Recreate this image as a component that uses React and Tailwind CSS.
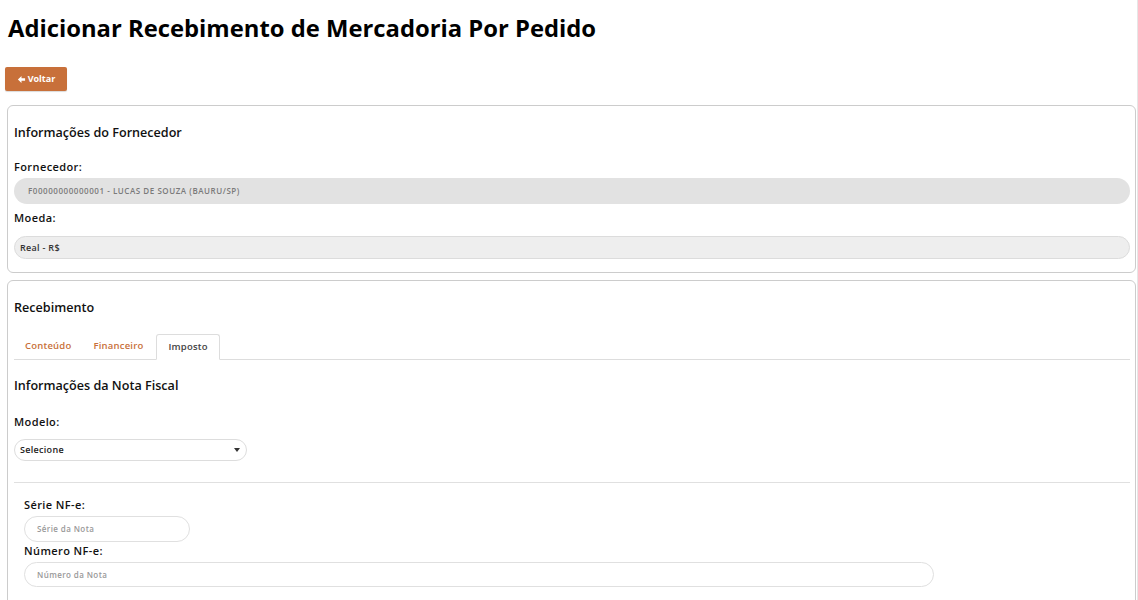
import React from "react";

export default function App() {
  const f = { fontFamily: '"Open Sans", "Noto Sans", sans-serif' };
  return (
    <div className="w-[1138px] h-[600px] bg-white overflow-hidden border-r border-[#e6e6e6] text-[#111]" style={f}>
      <div className="pl-[8px] pt-[12px]">
        <h1 className="text-[23.8px] leading-[32px] font-bold text-black">Adicionar Recebimento de Mercadoria Por Pedido</h1>
      </div>
      <div className="pl-[5px] mt-[23px]">
        <button className="w-[62px] h-[24px] bg-[#c8703a] rounded-[2px] text-white text-[9px] font-bold flex items-center justify-center gap-[2px] shadow-[0_1px_1px_rgba(0,0,0,0.15)]">
          <svg width="9" height="9" viewBox="0 0 10 10"><path d="M1 5 L5 1 L5 3.5 L9 3.5 L9 6.5 L5 6.5 L5 9 Z" fill="white" /></svg>
          Voltar
        </button>
      </div>

      <div className="mx-[7px] mt-[14px] w-[1129px] h-[168px] border border-[#cccccc] rounded-[6px] px-[6px] pt-[18px]">
        <h2 className="text-[12.6px] leading-[18px] font-semibold">Informações do Fornecedor</h2>
        <div className="mt-[18px] text-[11px] leading-[14px] font-semibold tracking-[0.4px]">Fornecedor:</div>
        <div className="mt-[4px] h-[26px] w-[1116px] rounded-full bg-[#e2e2e2] flex items-center pl-[14px] text-[8px] font-semibold text-[#7a7a7a] tracking-[0.55px]">F00000000000001 - LUCAS DE SOUZA (BAURU/SP)</div>
        <div className="mt-[7px] text-[11px] leading-[14px] font-semibold tracking-[0.4px]">Moeda:</div>
        <div className="mt-[11px] h-[23px] w-[1116px] rounded-full bg-[#eeeeee] border border-[#dcdcdc] flex items-center pl-[5px] text-[9px] font-semibold text-[#333] tracking-[0.3px]">Real - R$</div>
      </div>

      <div className="mx-[7px] mt-[7px] w-[1129px] h-[340px] border border-[#cccccc] rounded-[6px] px-[6px] pt-[18px]">
        <h2 className="text-[12.6px] leading-[18px] font-semibold">Recebimento</h2>
        <div className="mt-[17px] w-[1116px] border-b border-[#dddddd] flex items-end h-[26px]">
          <div className="px-[11px] h-[25px] flex items-center text-[9.5px] font-semibold text-[#c8703a] tracking-[0.2px]">Conteúdo</div>
          <div className="px-[11px] h-[25px] flex items-center text-[9.5px] font-semibold text-[#c8703a] tracking-[0.2px]">Financeiro</div>
          <div className="ml-[2px] px-[11px] h-[26px] -mb-px bg-white border border-[#dddddd] border-b-white rounded-t-[3px] flex items-center text-[9.5px] font-semibold text-[#444] tracking-[0.2px]">Imposto</div>
        </div>
        <h2 className="mt-[17px] text-[12.6px] leading-[18px] font-semibold">Informações da Nota Fiscal</h2>
        <div className="mt-[20px] text-[11px] leading-[14px] font-semibold tracking-[0.4px]">Modelo:</div>
        <div className="mt-[10px] h-[22px] w-[233px] rounded-full border border-[#dddddd] flex items-center justify-between pl-[5px] pr-[6px] text-[9px] font-semibold text-[#222] tracking-[0.3px]">
          <span>Selecione</span>
          <svg width="6" height="4" viewBox="0 0 6 4"><path d="M0 0 L6 0 L3 4 Z" fill="#333" /></svg>
        </div>
        <div className="mt-[21px] w-[1116px] border-t border-[#e0e0e0]"></div>
        <div className="pl-[10px]">
          <div className="mt-[15px] text-[11px] leading-[14px] font-semibold tracking-[0.4px]">Série NF-e:</div>
          <div className="mt-[4px] h-[26px] w-[166px] rounded-full border border-[#e0e0e0] flex items-center pl-[12px] text-[8px] font-semibold text-[#999] tracking-[0.4px]">Série da Nota</div>
          <div className="mt-[2px] text-[11px] leading-[14px] font-semibold tracking-[0.4px]">Número NF-e:</div>
          <div className="mt-[4px] h-[25px] w-[910px] rounded-full border border-[#e0e0e0] flex items-center pl-[12px] text-[8px] font-semibold text-[#999] tracking-[0.4px]">Número da Nota</div>
        </div>
      </div>
    </div>
  );
}
